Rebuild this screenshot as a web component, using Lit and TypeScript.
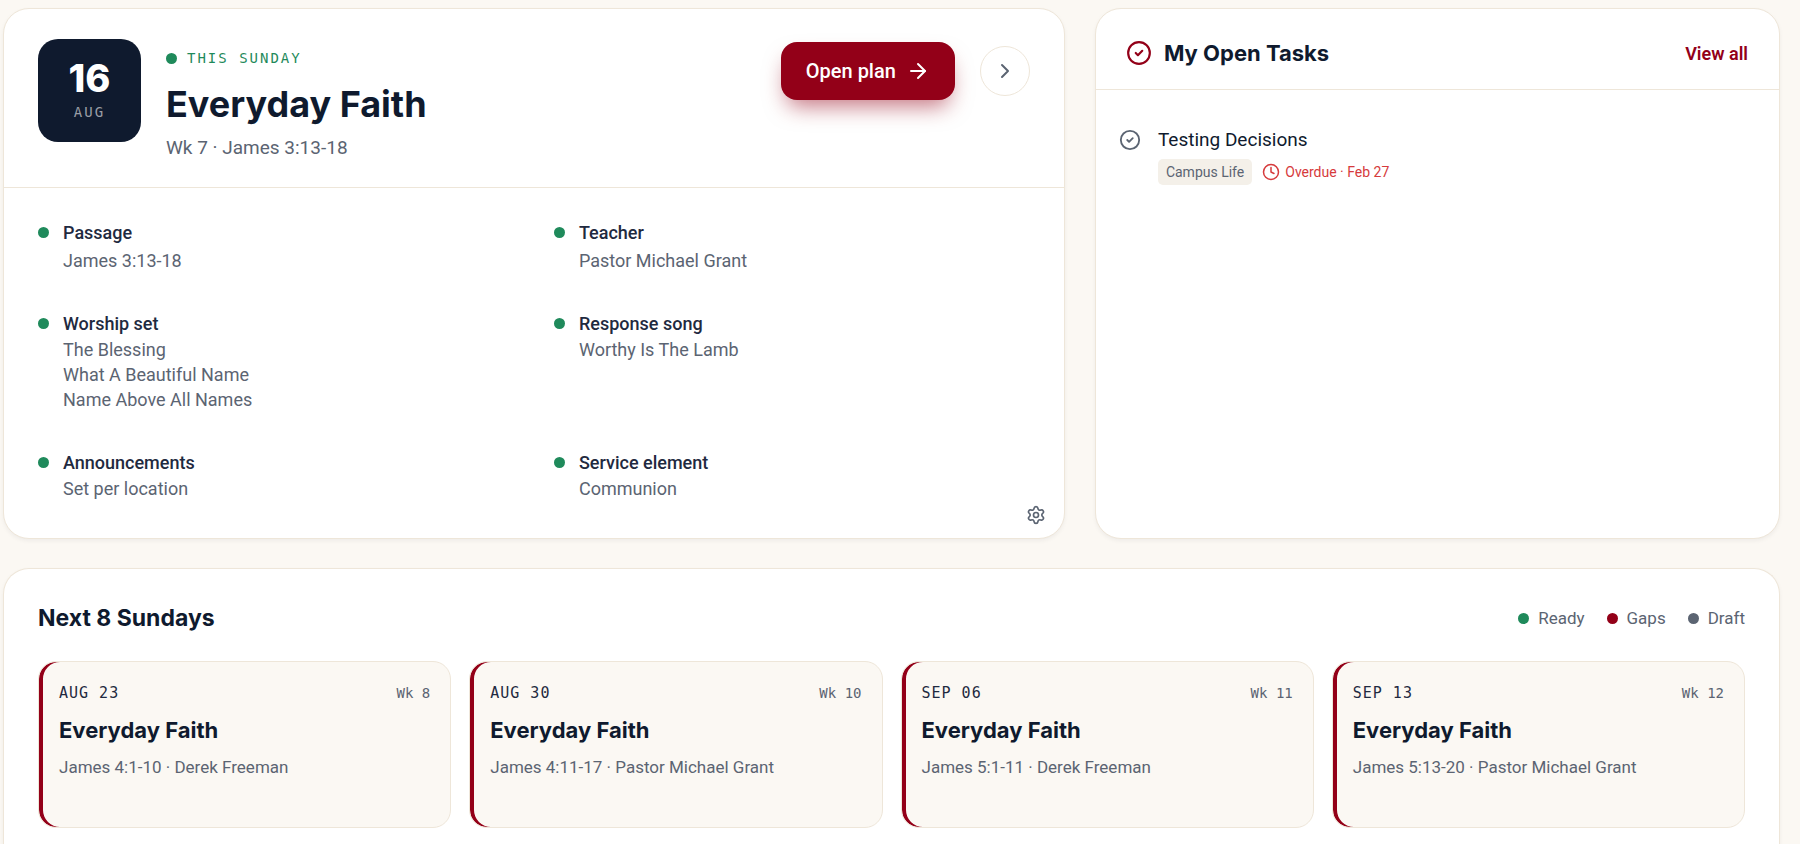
import { LitElement, html, css, svg } from "lit";
import { customElement } from "lit/decorators.js";

interface Detail {
  label: string;
  values: string[];
  roomy?: boolean;
}

interface Sunday {
  date: string;
  week: string;
  title: string;
  passage: string;
  teacher: string;
}

const details: Detail[] = [
  { label: "Passage", values: ["James 3:13-18"], roomy: true },
  { label: "Teacher", values: ["Pastor Michael Grant"], roomy: true },
  { label: "Worship set", values: ["The Blessing", "What A Beautiful Name", "Name Above All Names"] },
  { label: "Response song", values: ["Worthy Is The Lamb"] },
  { label: "Announcements", values: ["Set per location"] },
  { label: "Service element", values: ["Communion"] },
];

const sundays: Sunday[] = [
  { date: "AUG 23", week: "Wk 8", title: "Everyday Faith", passage: "James 4:1-10", teacher: "Derek Freeman" },
  { date: "AUG 30", week: "Wk 10", title: "Everyday Faith", passage: "James 4:11-17", teacher: "Pastor Michael Grant" },
  { date: "SEP 06", week: "Wk 11", title: "Everyday Faith", passage: "James 5:1-11", teacher: "Derek Freeman" },
  { date: "SEP 13", week: "Wk 12", title: "Everyday Faith", passage: "James 5:13-20", teacher: "Pastor Michael Grant" },
];

const glyphs = {
  arrow: svg`<path d="M5 12h14"/><path d="m12 5 7 7-7 7"/>`,
  chevron: svg`<path d="m9 18 6-6-6-6"/>`,
  check: svg`<circle cx="12" cy="12" r="10"/><path d="m9 12 2 2 4-4"/>`,
  clock: svg`<circle cx="12" cy="12" r="10"/><path d="M12 6v6l4 2"/>`,
  gear: svg`<path d="M9.671 4.136a2.34 2.34 0 0 1 4.659 0 2.34 2.34 0 0 0 3.319 1.915 2.34 2.34 0 0 1 2.33 4.033 2.34 2.34 0 0 0 0 3.831 2.34 2.34 0 0 1-2.33 4.033 2.34 2.34 0 0 0-3.319 1.915 2.34 2.34 0 0 1-4.659 0 2.34 2.34 0 0 0-3.32-1.915 2.34 2.34 0 0 1-2.33-4.033 2.34 2.34 0 0 0 0-3.831A2.34 2.34 0 0 1 6.35 6.051a2.34 2.34 0 0 0 3.319-1.915"/><circle cx="12" cy="12" r="3"/>`,
};

const icon = (name: keyof typeof glyphs, size: number) => html`<svg
  class="icon" width=${size} height=${size} viewBox="0 0 24 24" fill="none" stroke="currentColor"
  stroke-width="2" stroke-linecap="round" stroke-linejoin="round" aria-hidden="true">${glyphs[name]}</svg>`;

@customElement("app-root")
export class AppRoot extends LitElement {
  static styles = css`
    :host {
      --ink: #0f1a2e;
      --label: #1f2a40;
      --muted: #5b6472;
      --line: #eee6d9;
      --canvas: #fbf8f3;
      --green: #1f8a5b;
      --red: #930018;
      --heading: Inter, "Liberation Sans", sans-serif;
      --mono: "DejaVu Sans Mono", "Liberation Mono", monospace;
      display: block;
      font-family: Roboto, "Liberation Sans", sans-serif;
      color: var(--ink);
      background: var(--canvas);
    }
    * { box-sizing: border-box; }
    h1, h2, h3, p, ul, dl, dd { margin: 0; padding: 0; }
    ul { list-style: none; }
    button { font: inherit; cursor: pointer; padding: 0; }
    a { text-decoration: none; }
    .icon { display: block; flex: none; }

    .page {
      display: flex;
      flex-direction: column;
      gap: 29px;
      height: 100vh;
      overflow: hidden;
      padding: 8px 20px 0 3px;
    }
    .top {
      display: grid;
      grid-template-columns: minmax(0, 155fr) minmax(0, 100fr);
      gap: 30px;
    }
    .card {
      background: #fff;
      border: 1px solid var(--line);
      border-radius: 26px;
      box-shadow: 0 2px 4px rgba(15, 26, 46, 0.05);
    }
    .dot {
      flex: none;
      width: 11px;
      height: 11px;
      border-radius: 50%;
      background: var(--green);
    }
    .dot.gaps { background: var(--red); }
    .dot.draft { background: var(--muted); }

    .hero { position: relative; }
    .hero-head {
      display: flex;
      align-items: flex-start;
      padding: 30px 34px 27px;
      border-bottom: 1px solid var(--line);
    }
    .date {
      display: flex;
      flex-direction: column;
      align-items: center;
      justify-content: center;
      gap: 5px;
      width: 103px;
      height: 103px;
      border-radius: 20px;
      background: var(--ink);
      color: #fff;
    }
    .day { font: 800 38px/38px var(--heading); }
    .month {
      font: 14px/20px var(--mono);
      letter-spacing: 2px;
      color: #9a9ea6;
    }
    .intro { flex: 1; padding: 8px 0 0 25px; }
    .eyebrow {
      display: flex;
      align-items: center;
      gap: 10px;
      font: 14px/22px var(--mono);
      letter-spacing: 2px;
      color: var(--green);
    }
    h1 { font: 700 36px/44px var(--heading); margin: 13px 0 10px; }
    .sub { font-size: 19px; line-height: 24px; color: var(--muted); }
    .actions {
      display: flex;
      align-items: center;
      gap: 25px;
      padding-top: 3px;
    }
    .primary {
      display: flex;
      align-items: center;
      gap: 10px;
      height: 58px;
      padding: 0 25px;
      border: 0;
      border-radius: 16px;
      background: var(--red);
      color: #fff;
      font-size: 20px;
      font-weight: 500;
      box-shadow: 0 12px 22px -6px rgba(147, 0, 24, 0.55);
    }
    .round {
      display: grid;
      place-items: center;
      width: 50px;
      height: 50px;
      border: 1px solid var(--line);
      border-radius: 50%;
      background: #fff;
      color: var(--muted);
    }

    .details {
      display: grid;
      grid-template-columns: 1fr 1fr;
      gap: 38px 40px;
      padding: 32px 34px 37px;
    }
    .detail {
      display: flex;
      gap: 14px;
      font-size: 18px;
      line-height: 25px;
    }
    .detail .dot { margin-top: 7px; }
    .detail dt { font-weight: 500; color: var(--label); }
    .detail dd { margin-top: 1px; color: var(--muted); }
    .detail.roomy dd { margin-top: 3px; }
    .settings {
      position: absolute;
      right: 18px;
      bottom: 13px;
      border: 0;
      background: none;
      color: var(--muted);
    }

    .tasks-head {
      display: flex;
      align-items: center;
      gap: 12px;
      padding: 30px 31px 22px 30px;
      border-bottom: 1px solid var(--line);
      color: var(--red);
    }
    .tasks-head h2 {
      flex: 1;
      font: 700 22px/28px var(--heading);
      color: var(--ink);
    }
    .view-all { font-size: 18px; font-weight: 600; color: var(--red); }
    .tasks { padding: 37px 23px; }
    .task { display: flex; gap: 17px; }
    .tick {
      height: 26px;
      border: 0;
      background: none;
      color: var(--muted);
    }
    .task h3 { font-size: 19px; line-height: 26px; font-weight: 400; }
    .meta {
      display: flex;
      align-items: center;
      gap: 10px;
      margin-top: 6px;
      font-size: 14px;
      line-height: 26px;
    }
    .chip {
      padding: 0 8px;
      border-radius: 5px;
      background: #f4f0e9;
      color: var(--muted);
    }
    .overdue { display: flex; align-items: center; gap: 5px; color: #d63a3c; }

    .next {
      flex: 1 0 auto;
      padding: 35px 34px;
      border-bottom: 0;
      border-radius: 26px 26px 0 0;
    }
    .next-head { display: flex; align-items: center; justify-content: space-between; }
    .next-head h2 { font: 700 23px/28px var(--heading); }
    .legend { display: flex; gap: 22px; font-size: 17px; line-height: 24px; color: var(--muted); }
    .legend li { display: flex; align-items: center; gap: 9px; }
    .weeks {
      display: grid;
      grid-template-columns: repeat(4, minmax(0, 1fr));
      gap: 18px;
      margin-top: 29px;
    }
    .week {
      display: block;
      min-height: 167px;
      padding: 20px;
      border: 1px solid var(--line);
      border-radius: 18px;
      background: var(--canvas);
      box-shadow: inset 4px 0 0 var(--red);
      color: var(--ink);
    }
    .week-top {
      display: flex;
      justify-content: space-between;
      font: 14px/22px var(--mono);
      color: var(--muted);
    }
    .week-date { font-size: 15px; letter-spacing: 1px; color: var(--label); }
    .week h3 { font: 700 22px/30px var(--heading); margin: 11px 0 10px; }
    .week p { font-size: 17px; line-height: 24px; color: var(--muted); }
  `;

  private renderDetail(d: Detail) {
    return html`<div class="detail ${d.roomy ? "roomy" : ""}">
      <span class="dot"></span>
      <dl>
        <dt>${d.label}</dt>
        <dd>${d.values.map((v) => html`<div>${v}</div>`)}</dd>
      </dl>
    </div>`;
  }

  private renderSunday(s: Sunday) {
    return html`<a class="week" href="#">
      <div class="week-top"><span class="week-date">${s.date}</span><span>${s.week}</span></div>
      <h3>${s.title}</h3>
      <p>${s.passage} · ${s.teacher}</p>
    </a>`;
  }

  render() {
    return html`<main class="page">
      <div class="top">
        <section class="card hero">
          <header class="hero-head">
            <div class="date"><span class="day">16</span><span class="month">AUG</span></div>
            <div class="intro">
              <p class="eyebrow"><span class="dot"></span>THIS SUNDAY</p>
              <h1>Everyday Faith</h1>
              <p class="sub">Wk 7 · James 3:13-18</p>
            </div>
            <div class="actions">
              <button class="primary" type="button">Open plan ${icon("arrow", 24)}</button>
              <button class="round" type="button" aria-label="Next Sunday">${icon("chevron", 24)}</button>
            </div>
          </header>
          <div class="details">${details.map((d) => this.renderDetail(d))}</div>
          <button class="settings" type="button" aria-label="Settings">${icon("gear", 20)}</button>
        </section>

        <section class="card">
          <header class="tasks-head">
            ${icon("check", 26)}
            <h2>My Open Tasks</h2>
            <a class="view-all" href="#">View all</a>
          </header>
          <ul class="tasks">
            <li class="task">
              <button class="tick" type="button" aria-label="Complete task">${icon("check", 22)}</button>
              <div>
                <h3>Testing Decisions</h3>
                <div class="meta">
                  <span class="chip">Campus Life</span>
                  <span class="overdue">${icon("clock", 18)}Overdue · Feb 27</span>
                </div>
              </div>
            </li>
          </ul>
        </section>
      </div>

      <section class="card next">
        <header class="next-head">
          <h2>Next 8 Sundays</h2>
          <ul class="legend">
            <li><span class="dot"></span>Ready</li>
            <li><span class="dot gaps"></span>Gaps</li>
            <li><span class="dot draft"></span>Draft</li>
          </ul>
        </header>
        <div class="weeks">${sundays.map((s) => this.renderSunday(s))}</div>
      </section>
    </main>`;
  }
}
